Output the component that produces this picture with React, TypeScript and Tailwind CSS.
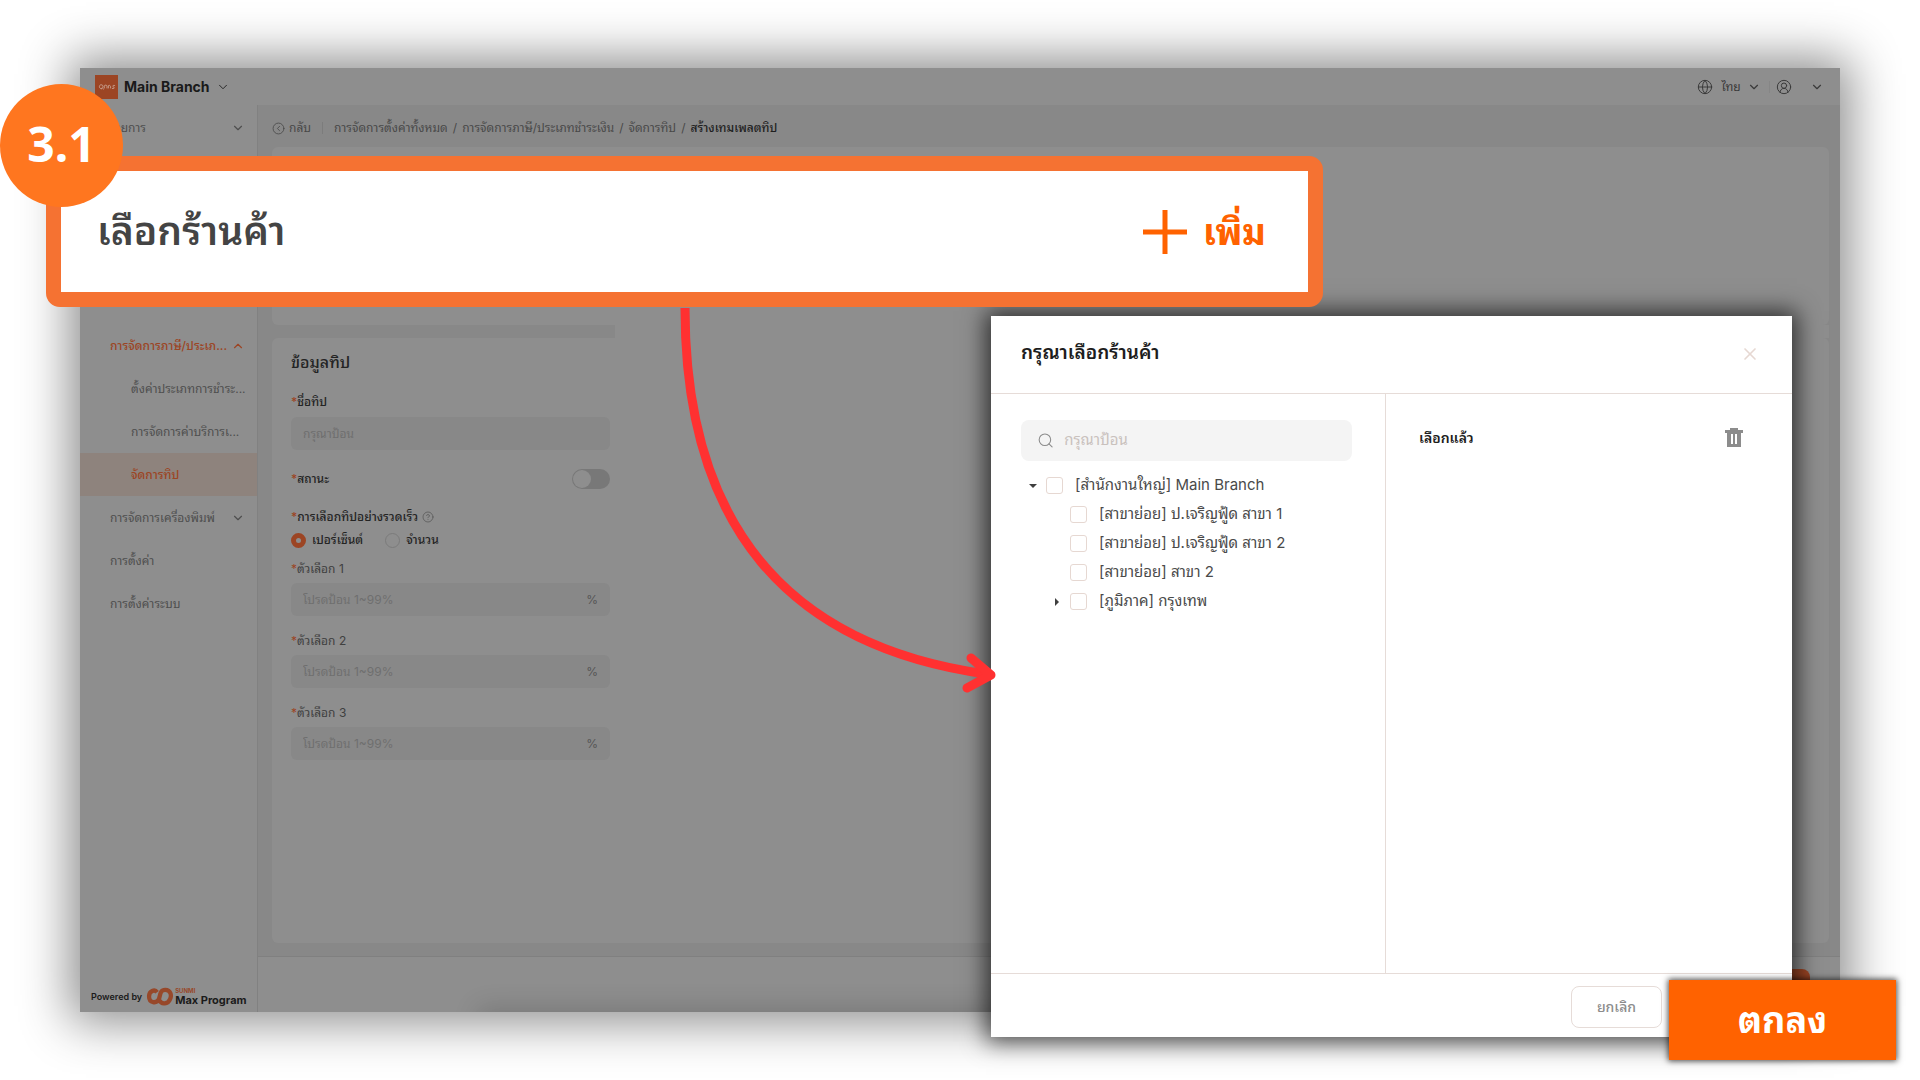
import React from "react";
import {
  ChevronDown,
  ChevronUp,
  CircleChevronLeft,
  CircleHelp,
  CircleUserRound,
  Globe,
  Search,
  X,
} from "lucide-react";

type MenuItem = {
  label: string;
  kind: "group" | "child" | "link";
  open?: boolean;
  active?: boolean;
};

const menu: MenuItem[] = [
  { label: "การจัดการภาษี/ประเภ...", kind: "group", open: true, active: true },
  { label: "ตั้งค่าประเภทการชำระ...", kind: "child" },
  { label: "การจัดการค่าบริการเ...", kind: "child" },
  { label: "จัดการทิป", kind: "child", active: true },
  { label: "การจัดการเครื่องพิมพ์", kind: "group" },
  { label: "การตั้งค่า", kind: "link" },
  { label: "การตั้งค่าระบบ", kind: "link" },
];

const crumbs = [
  "การจัดการตั้งค่าทั้งหมด",
  "การจัดการภาษี/ประเภทชำระเงิน",
  "จัดการทิป",
];

const branches = [
  { id: "main", label: "[สำนักงานใหญ่] Main Branch", caret: "down" },
  { id: "sub1", label: "[สาขาย่อย] ป.เจริญฟู้ด สาขา 1" },
  { id: "sub2", label: "[สาขาย่อย] ป.เจริญฟู้ด สาขา 2" },
  { id: "sub3", label: "[สาขาย่อย] สาขา 2" },
  { id: "region", label: "[ภูมิภาค] กรุงเทพ", caret: "right" },
];

const Star = () => <span className="text-[#9c4524]">*</span>;

const Header = () => (
  <header className="flex h-[37px] shrink-0 items-center justify-between pl-[15px] pr-4 text-[#3a3a3a]">
    <button className="flex items-center gap-[6px] text-[14px] font-bold text-[#1a1a1a]">
      <span className="flex h-6 w-[23px] items-center justify-center bg-[#9c4524]">
        <svg viewBox="0 0 20 8" className="w-[18px]" fill="none" stroke="#c9a493">
          <path d="M4.5 6.5C1 7 .5 2 3.500 2S6 6 3.500 6M5 6l1.500 1M7 6V3.500c0-1.500 3-1.500 3 0V6M11.500 6V3c1-1 2.500 0 2.500 1v2M19 3c-2-1-3.500.5-2 1.200S19 6.500 15.500 6" />
        </svg>
      </span>
      Main Branch
      <ChevronDown size={14} strokeWidth={1.5} />
    </button>
    <div className="flex items-center text-xs">
      <Globe size={16} strokeWidth={1.5} />
      <label className="ml-[6px] flex items-center gap-1">
        <select aria-label="ภาษา" className="w-6 appearance-none text-center">
          <option>ไทย</option>
        </select>
        <ChevronDown size={14} />
      </label>
      <span className="ml-2 h-3 w-px bg-[#868686]" />
      <button className="ml-[6px] flex items-center gap-[18px]" aria-label="บัญชี">
        <CircleUserRound size={16} strokeWidth={1.5} />
        <ChevronDown size={14} />
      </button>
    </div>
  </header>
);

const Sidebar = () => (
  <nav className="flex w-[178px] shrink-0 flex-col border-r border-[#818181] pt-px text-xs text-[#4f4f4f]">
    <a href="#" className="flex h-[43px] items-center justify-between pl-[30px] pr-3">
      รายการ
      <ChevronDown size={14} />
    </a>
    <div className="mt-[175px] flex flex-col">
      {menu.map((item) => (
        <a
          key={item.label}
          href="#"
          className={`flex h-[43px] items-center justify-between pr-3 ${
            item.kind === "child" ? "pl-[51px]" : "pl-[30px]"
          } ${item.active ? "font-medium text-[#9c4524]" : ""} ${
            item.active && item.kind === "child" ? "bg-[#8e837d]" : ""
          }`}
        >
          <span className="whitespace-nowrap">{item.label}</span>
          {item.kind === "group" &&
            (item.open ? <ChevronUp size={14} /> : <ChevronDown size={14} />)}
        </a>
      ))}
    </div>
    <div className="mt-auto flex items-center gap-1 pb-[6px] pl-[11px] text-[#1b1b1b]">
      <span className="text-[9px] font-semibold">Powered by</span>
      <div className="flex items-center gap-0.5">
        <svg viewBox="0 0 28 20" className="h-[19px] w-[27px]" fill="none" stroke="#97482a" strokeWidth="4.500">
          <path d="M11.500 5.500C9 2 3 4 3 10c0 7 8 8 10.500 2.500C15 7 15 3 20 3c6 0 7 6 5 10-2 5-9 6-11 1" />
        </svg>
        <div className="font-bold">
          <div className="text-[6px] leading-[6px] text-[#97482a]">SUNMI</div>
          <div className="text-[11px] leading-[12px]">Max Program</div>
        </div>
      </div>
    </div>
  </nav>
);

const Breadcrumbs = () => (
  <div className="flex h-[42px] items-center gap-[5px] pl-[14px] pt-1 text-xs text-[#484848]">
    <button className="flex items-center gap-1">
      <CircleChevronLeft size={13} strokeWidth={1.5} />
      กลับ
    </button>
    <span className="mx-[6px] h-3 w-px bg-[#7c7c7c]" />
    {crumbs.map((crumb) => (
      <React.Fragment key={crumb}>
        <a href="#">{crumb}</a>
        <span>/</span>
      </React.Fragment>
    ))}
    <span className="font-medium text-[#1f1f1f]">สร้างเทมเพลตทิป</span>
  </div>
);

const TipForm = () => (
  <form className="flex w-[319px] flex-col text-xs text-[#242424]">
    <h2 className="text-base leading-6 font-medium">ข้อมูลทิป</h2>
    <label htmlFor="tip-name" className="mt-[18px] leading-5 font-medium">
      <Star />
      ชื่อทิป
    </label>
    <input
      id="tip-name"
      placeholder="กรุณาป้อน"
      className="mt-[5px] h-[33px] rounded-md bg-[#888] px-3 placeholder:text-[#6f6f6f]"
    />
    <div className="mt-[19px] flex h-5 items-center justify-between">
      <label htmlFor="tip-status" className="font-medium">
        <Star />
        สถานะ
      </label>
      <span className="relative flex h-5 w-[38px]">
        <input
          id="tip-status"
          type="checkbox"
          className="h-5 w-[38px] appearance-none rounded-full bg-[#787878]"
        />
        <span className="pointer-events-none absolute top-px left-px h-[18px] w-[18px] rounded-full bg-[#8e8e8e]" />
      </span>
    </div>
    <div className="mt-[18px] flex h-5 items-center gap-1 font-medium">
      <span>
        <Star />
        การเลือกทิปอย่างรวดเร็ว
      </span>
      <CircleHelp size={12} strokeWidth={1.5} className="text-[#555]" />
    </div>
    <div className="mt-[3px] flex h-5 items-center gap-[22px] font-medium">
      <label className="flex items-center gap-[6px]">
        <input
          type="radio"
          name="mode"
          defaultChecked
          className="h-[15px] w-[15px] appearance-none rounded-full border-[5px] border-[#9c4524]"
        />
        เปอร์เซ็นต์
      </label>
      <label className="flex items-center gap-[6px]">
        <input
          type="radio"
          name="mode"
          className="h-[15px] w-[15px] appearance-none rounded-full border border-[#7b7b7b]"
        />
        จำนวน
      </label>
    </div>
    {[1, 2, 3].map((n) => (
      <div key={n} className="mt-[9px] flex h-[63px] flex-col">
        <label htmlFor={`choice-${n}`} className="leading-5 text-[#404040]">
          <Star />
          ตัวเลือก {n}
        </label>
        <div className="mt-1 flex h-[33px] items-center rounded-md bg-[#888] px-3">
          <input
            id={`choice-${n}`}
            placeholder="โปรดป้อน 1~99%"
            className="w-full min-w-0 placeholder:text-[#6f6f6f]"
          />
          <span className="text-[#555]">%</span>
        </div>
      </div>
    ))}
  </form>
);

const Backdrop = () => (
  <div className="flex flex-1 flex-col overflow-hidden bg-[#8e8e8e]">
    <Header />
    <div className="flex flex-1">
      <Sidebar />
      <main className="flex flex-1 flex-col bg-[#888]">
        <Breadcrumbs />
        <section className="mr-[11px] ml-[14px] h-[178px] rounded-md bg-[#8e8e8e]" />
        <div className="mr-[11px] ml-[14px] flex h-[13px] justify-end">
          <div className="w-[1214px] bg-[#8e8e8e]" />
        </div>
        <section className="mr-[11px] ml-[14px] flex-1 rounded-md bg-[#8e8e8e] px-[19px] pt-3">
          <TipForm />
        </section>
        <footer className="relative mt-[13px] flex h-14 justify-end overflow-hidden border-t border-[#808080] bg-[#8e8e8e] pt-3 pr-[30px]">
          <div className="absolute top-full right-0 left-56 h-5 shadow-[0_0_26px_4px_rgba(0,0,0,0.16)]" />
          <button className="h-9 w-24 rounded-lg bg-[#9c4524] text-xs">บันทึก</button>
        </footer>
      </main>
    </div>
  </div>
);

const Callout = () => (
  <div className="absolute top-[156px] right-[597px] left-[46px] flex h-[151px] items-center justify-between rounded-[14px] border-[15px] border-[#f57232] bg-white pr-[42px] pl-9">
    <h1 className="text-[39px] font-semibold text-[#444]">เลือกร้านค้า</h1>
    <button className="flex items-center gap-4 text-[36px] font-bold text-[#ff6200]">
      <svg viewBox="0 0 44 44" className="h-11 w-11" stroke="#ff6200" strokeWidth="5">
        <path d="M22 0v44M0 22h44" />
      </svg>
      เพิ่ม
    </button>
  </div>
);

const StoreDialog = () => (
  <div
    role="dialog"
    className="absolute right-[128px] bottom-[43px] flex h-[721px] w-[801px] flex-col bg-white text-[15px] text-[#4a4a4a] shadow-[0_0_22px_5px_rgba(0,0,0,0.68)]"
  >
    <div className="flex h-[78px] items-center justify-between border-b border-[#e6dcd8] pr-8 pb-0.5 pl-[30px]">
      <h2 className="text-[19px] font-semibold text-[#1d1d1d]">กรุณาเลือกร้านค้า</h2>
      <button aria-label="ปิด" className="text-[#e6d8d2]">
        <X size={20} />
      </button>
    </div>
    <div className="flex flex-1">
      <div className="w-[395px] border-r border-[#e6dcd8] px-[30px] pt-[26px]">
        <label className="flex h-[41px] w-[331px] items-center gap-[10px] rounded-lg bg-[#f4f4f4] px-4 text-[#8c8c8c]">
          <Search size={19} strokeWidth={1.5} />
          <input
            aria-label="ค้นหา"
            placeholder="กรุณาป้อน"
            className="w-full min-w-0 placeholder:text-[#c9c1bd]"
          />
        </label>
        <ul className="mt-[10px]">
          {branches.map((b, i) => (
            <li
              key={b.id}
              className={`flex h-[29px] items-center ${i === 0 ? "pl-2" : "pl-8"}`}
            >
              <span className="flex w-[17px]">
                {b.caret && (
                  <svg viewBox="0 0 8 8" className="h-2 w-2" fill="#3f3f3f">
                    <path d={b.caret === "down" ? "M0 2h8L4 6z" : "M2 0v8l4-4z"} />
                  </svg>
                )}
              </span>
              <label className="flex items-center gap-3">
                <input
                  type="checkbox"
                  className="h-[17px] w-[17px] appearance-none rounded-[3px] border border-[#e6d8d2]"
                />
                {b.label}
              </label>
            </li>
          ))}
        </ul>
      </div>
      <div className="flex flex-1 items-start justify-between pt-[34px] pr-[49px] pl-[33px]">
        <h3 className="text-sm leading-5 font-semibold text-[#1d1d1d]">เลือกแล้ว</h3>
        <button aria-label="ล้าง">
          <svg viewBox="0 0 18 20" className="h-5 w-[18px]" fill="#8c8c8c">
            <path
              fillRule="evenodd"
              d="M5 0h8v2h5v3h-2v14H2V5H0V2h5zM6 6v10h2V6zM10 6v10h2V6z"
            />
          </svg>
        </button>
      </div>
    </div>
    <div className="flex h-16 items-start justify-end border-t border-[#e6dcd8] pt-3 pr-[130px]">
      <button className="h-[42px] w-[91px] rounded-lg border border-[#e6dcd8] text-sm font-medium text-[#8c8c8c]">
        ยกเลิก
      </button>
    </div>
  </div>
);

const Arrow = () => (
  <svg
    viewBox="0 0 320 400"
    className="absolute top-[300px] left-[680px] h-[400px] w-[320px]"
    fill="none"
    stroke="#ff3131"
    strokeWidth="9"
  >
    <path d="M5 8C5 226 108 346 306 374" />
    <path d="M291 358L311 375L287 388" strokeLinecap="round" strokeLinejoin="round" />
  </svg>
);

export default function App() {
  return (
    <div className="relative flex min-h-screen flex-col overflow-hidden bg-white pt-[68px] pr-20 pb-[68px] pl-20 font-['Inter','Noto_Sans_Thai_Looped','Loma','Noto_Sans_Thai','Noto_Sans',sans-serif]">
      <div className="flex flex-1 flex-col shadow-[0_0_46px_10px_rgba(0,0,0,0.45)]">
        <Backdrop />
      </div>
      <StoreDialog />
      <Arrow />
      <Callout />
      <div className="absolute top-[84px] left-0 flex h-[123px] w-[123px] items-center justify-center rounded-full bg-[#ff761f] pb-1 font-['Noto_Sans',sans-serif] text-[48px] font-bold text-white">
        3.1
      </div>
      <button className="absolute right-6 bottom-5 h-20 w-[227px] bg-[#ff6200] text-[36px] font-bold text-white shadow-[0_0_6px_1px_rgba(0,0,0,0.7)]">
        ตกลง
      </button>
    </div>
  );
}
